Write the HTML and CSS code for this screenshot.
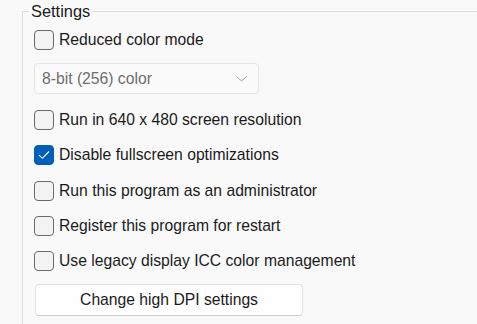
FILE: index.html
```html
<!DOCTYPE html>
<html lang="en">
    <head>
        <meta charset="UTF-8">
        <title>Settings</title>
        <link rel="stylesheet" href="styles.css">
    </head>
    <body>
        <fieldset class="settings">
            <legend>Settings</legend>
            <label class="check">
                <input type="checkbox">
                <span class="box"></span>
                Reduced color mode
            </label>
            <div class="select">
                <span>8-bit (256) color</span>
                <svg width="11" height="6" viewBox="0 0 11 6">
                    <path d="M0.5 0.5 L5.5 5 L10.5 0.5" fill="none" stroke="#a0a0a0" stroke-width="1"/>
                </svg>
            </div>
            <div class="checks">
                <label class="check">
                    <input type="checkbox">
                    <span class="box"></span>
                    Run in 640 x 480 screen resolution
                </label>
                <label class="check">
                    <input type="checkbox" checked>
                    <span class="box">
                        <svg width="12" height="10" viewBox="0 0 12 10">
                            <path d="M1 5.2 L4.3 8.3 L11 1.5" fill="none" stroke="#fff" stroke-width="1.1"/>
                        </svg>
                    </span>
                    Disable fullscreen optimizations
                </label>
                <label class="check">
                    <input type="checkbox">
                    <span class="box"></span>
                    Run this program as an administrator
                </label>
                <label class="check">
                    <input type="checkbox">
                    <span class="box"></span>
                    Register this program for restart
                </label>
                <label class="check">
                    <input type="checkbox">
                    <span class="box"></span>
                    Use legacy display ICC color management
                </label>
            </div>
            <button type="button">Change high DPI settings</button>
        </fieldset>
    </body>
</html>
```

FILE: styles.css
```css
html, body {
    margin: 0;
    height: 100%;
    overflow: hidden;
    background-color: #f9f9f9;
}
body {
    font-family: "Liberation Sans", Arial, sans-serif;
    font-size: 15.7px;
    color: #1b1b1b;
}
.settings {
    margin: 0 0 0 22px;
    padding: 8px 0 40px 11px;
    width: 600px;
    border: 1px solid #dcdcdc;
    border-right: none;
    border-bottom: none;
    display: flex;
    flex-direction: column;
    align-items: flex-start;
}
.settings legend {
    margin-left: -5px;
    padding: 0 2px;
    font-size: 16.4px;
    line-height: 22px;
}
.check {
    display: flex;
    align-items: center;
    gap: 5px;
    height: 20px;
}
.check input {
    display: none;
}
.box {
    box-sizing: border-box;
    width: 20px;
    height: 20px;
    border: 1px solid #6b6b6b;
    border-radius: 4px;
    background-color: #f3f3f3;
    display: flex;
    align-items: center;
    justify-content: center;
}
.check input:checked + .box {
    background-color: #005fb8;
    border-color: #005fb8;
}
.select {
    box-sizing: border-box;
    margin-top: 13px;
    width: 225px;
    height: 31px;
    padding: 0 11px 0 7px;
    border: 1px solid #e5e5e5;
    border-radius: 4px;
    background-color: #fbfbfb;
    color: #6d6d6d;
    display: flex;
    align-items: center;
    justify-content: space-between;
}
.checks {
    margin-top: 16px;
    display: flex;
    flex-direction: column;
    gap: 15.25px;
}
button {
    margin: 13px 0 0 1px;
    width: 268px;
    height: 32px;
    font: inherit;
    color: #1b1b1b;
    background-color: #fefefe;
    border: 1px solid #e3e3e3;
    border-bottom-color: #cfcfcf;
    border-radius: 4px;
}
```
